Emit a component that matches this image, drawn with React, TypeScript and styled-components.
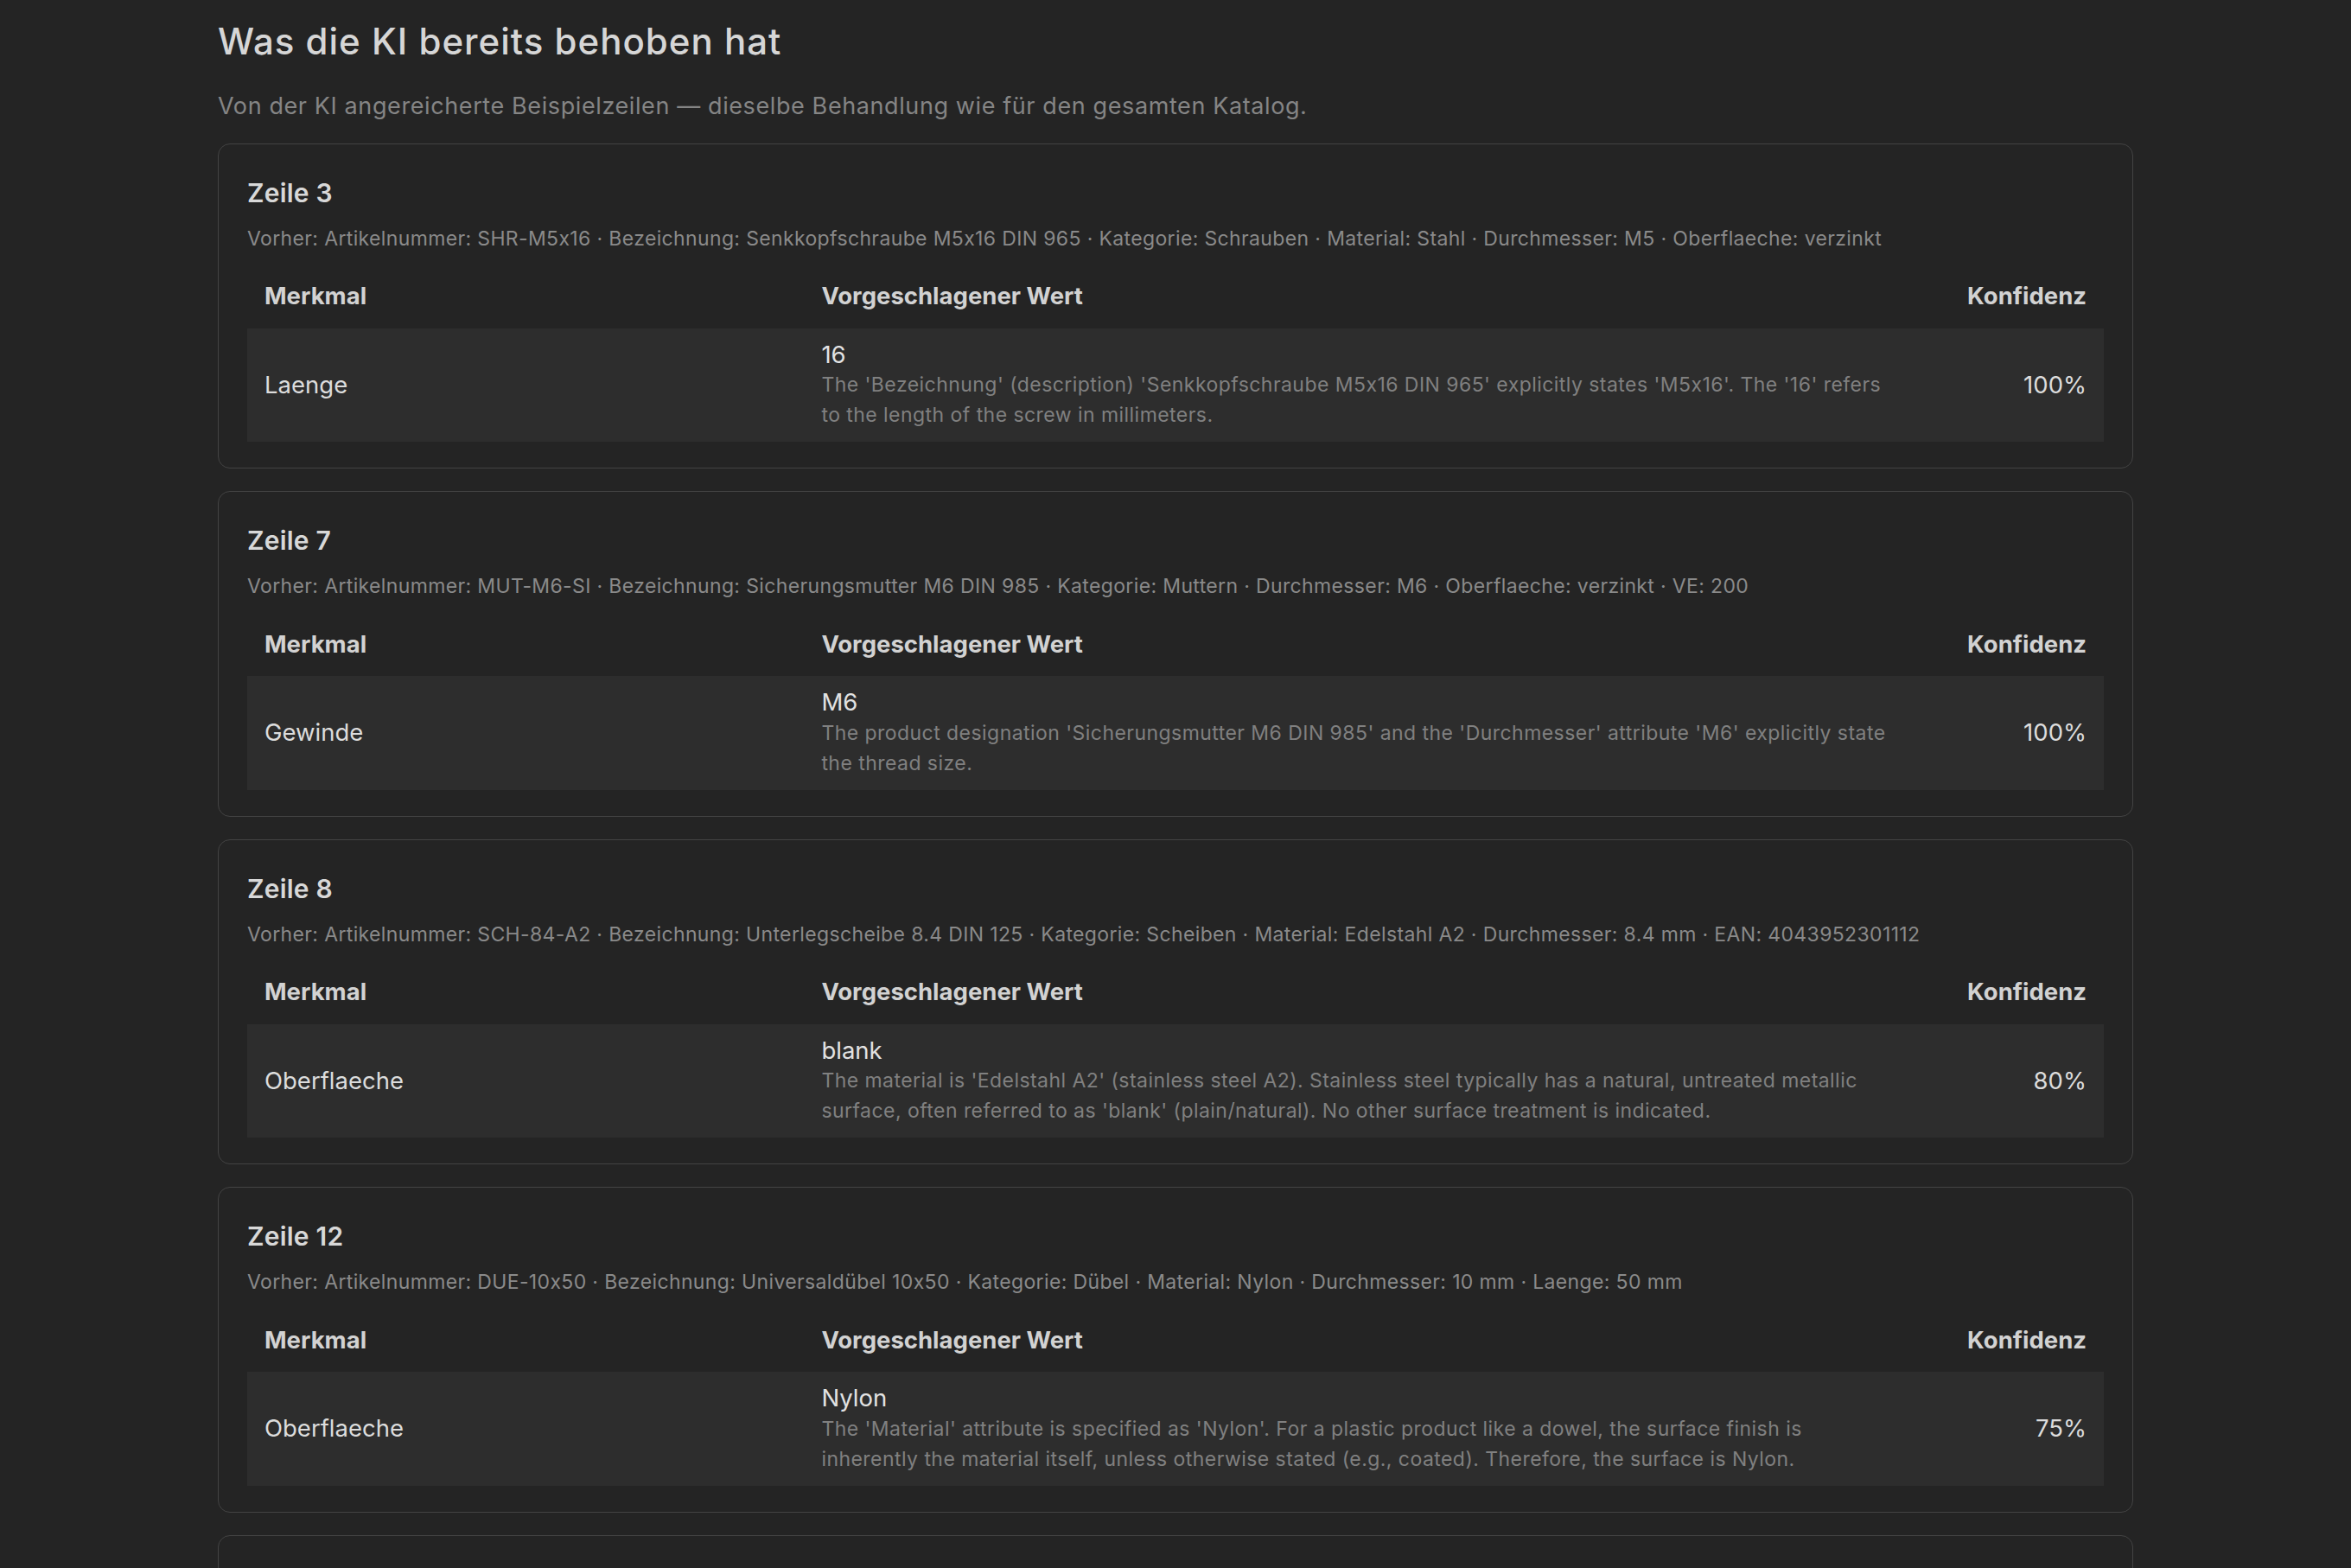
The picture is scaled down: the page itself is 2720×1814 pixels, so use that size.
import styled, { createGlobalStyle } from "styled-components"

const GlobalStyle = createGlobalStyle`
   html, body {
      margin: 0;
      padding: 0;
      background: #242424;
   }
   body {
      font-family: Inter, "Liberation Sans", sans-serif;
      font-feature-settings: "calt" 0;
      color: #d6d6d6;
   }
`

const Page = styled.main`
   box-sizing: border-box;
   width: 2216px;
   margin: 0 auto;
   padding: 23px 0 40px;
`

const Title = styled.h1`
   margin: 0;
   font-size: 42px;
   line-height: 1.2;
   font-weight: 500;
   letter-spacing: 1px;
   color: #d6d6d6;
`

const Lead = styled.p`
   margin: 30px 0 22px;
   font-size: 27px;
   line-height: 1.5;
   letter-spacing: 0.6px;
   color: #858585;
`

const CardList = styled.div`
   display: flex;
   flex-direction: column;
   gap: 26px;
`

const Card = styled.section`
   box-sizing: border-box;
   border: 1px solid #434343;
   border-radius: 14px;
   padding: 38px 33px 30px;
`

const CardTitle = styled.h2`
   margin: 0;
   font-size: 30px;
   line-height: 1.2;
   font-weight: 600;
   letter-spacing: 0.2px;
   color: #d8d8d8;
`

const Before = styled.p`
   margin: 18px 0 13px;
   font-size: 23px;
   line-height: 1.5;
   letter-spacing: 0.36px;
   color: #8a8a8a;
`

const Table = styled.table`
   width: 100%;
   border-collapse: collapse;
   table-layout: fixed;
`

const Head = styled.th<{ $right?: boolean }>`
   padding: 16px 20px;
   font-size: 27.5px;
   line-height: 1.5;
   font-weight: 700;
   color: #d2d2d2;
   text-align: ${p => (p.$right ? "right" : "left")};
`

const Row = styled.tr`
   background: #2d2d2d;
`

const Cell = styled.td<{ $right?: boolean }>`
   padding: 13px 20px;
   vertical-align: middle;
   font-size: 27.5px;
   line-height: 1.5;
   color: #dcdcdc;
   text-align: ${p => (p.$right ? "right" : "left")};
`

const Value = styled.div`
   font-size: 27.5px;
   line-height: 1.3;
   color: #e2e2e2;
`

const Reason = styled.div`
   font-size: 23px;
   line-height: 35px;
   letter-spacing: 0.45px;
   color: #808080;
`

type Fix = {
   row: number
   before: string
   field: string
   value: string
   reason: string
   confidence: number
}

const fixes: Fix[] = [
   {
      row: 3,
      before: "Artikelnummer: SHR-M5x16 · Bezeichnung: Senkkopfschraube M5x16 DIN 965 · Kategorie: Schrauben · Material: Stahl · Durchmesser: M5 · Oberflaeche: verzinkt",
      field: "Laenge",
      value: "16",
      reason: "The 'Bezeichnung' (description) 'Senkkopfschraube M5x16 DIN 965' explicitly states 'M5x16'. The '16' refers to the length of the screw in millimeters.",
      confidence: 100,
   },
   {
      row: 7,
      before: "Artikelnummer: MUT-M6-SI · Bezeichnung: Sicherungsmutter M6 DIN 985 · Kategorie: Muttern · Durchmesser: M6 · Oberflaeche: verzinkt · VE: 200",
      field: "Gewinde",
      value: "M6",
      reason: "The product designation 'Sicherungsmutter M6 DIN 985' and the 'Durchmesser' attribute 'M6' explicitly state the thread size.",
      confidence: 100,
   },
   {
      row: 8,
      before: "Artikelnummer: SCH-84-A2 · Bezeichnung: Unterlegscheibe 8.4 DIN 125 · Kategorie: Scheiben · Material: Edelstahl A2 · Durchmesser: 8.4 mm · EAN: 4043952301112",
      field: "Oberflaeche",
      value: "blank",
      reason: "The material is 'Edelstahl A2' (stainless steel A2). Stainless steel typically has a natural, untreated metallic surface, often referred to as 'blank' (plain/natural). No other surface treatment is indicated.",
      confidence: 80,
   },
   {
      row: 12,
      before: "Artikelnummer: DUE-10x50 · Bezeichnung: Universaldübel 10x50 · Kategorie: Dübel · Material: Nylon · Durchmesser: 10 mm · Laenge: 50 mm",
      field: "Oberflaeche",
      value: "Nylon",
      reason: "The 'Material' attribute is specified as 'Nylon'. For a plastic product like a dowel, the surface finish is inherently the material itself, unless otherwise stated (e.g., coated). Therefore, the surface is Nylon.",
      confidence: 75,
   },
   {
      row: 15,
      before: "Artikelnummer: SHR-M8x40 · Bezeichnung: Sechskantschraube M8x40 DIN 933 · Kategorie: Schrauben · Material: Stahl · Oberflaeche: verzinkt",
      field: "Durchmesser",
      value: "M8",
      reason: "The 'Bezeichnung' 'Sechskantschraube M8x40 DIN 933' explicitly states 'M8', which is the nominal diameter of the screw.",
      confidence: 100,
   },
]

function FixCard({ fix }: { fix: Fix }) {
   return <Card>
      <CardTitle>Zeile {fix.row}</CardTitle>
      <Before>Vorher: {fix.before}</Before>
      <Table>
         <colgroup>
            <col style={{ width: "30%" }} />
            <col />
            <col style={{ width: "10%" }} />
         </colgroup>
         <thead>
            <tr>
               <Head>Merkmal</Head>
               <Head>Vorgeschlagener Wert</Head>
               <Head $right>Konfidenz</Head>
            </tr>
         </thead>
         <tbody>
            <Row>
               <Cell>{fix.field}</Cell>
               <Cell>
                  <Value>{fix.value}</Value>
                  <Reason>{fix.reason}</Reason>
               </Cell>
               <Cell $right>{fix.confidence}%</Cell>
            </Row>
         </tbody>
      </Table>
   </Card>
}

export default function App() {
   return <>
      <GlobalStyle />
      <Page>
         <Title>Was die KI bereits behoben hat</Title>
         <Lead>Von der KI angereicherte Beispielzeilen — dieselbe Behandlung wie für den gesamten Katalog.</Lead>
         <CardList>
            {fixes.map(f => <FixCard key={f.row} fix={f} />)}
         </CardList>
      </Page>
   </>
}
